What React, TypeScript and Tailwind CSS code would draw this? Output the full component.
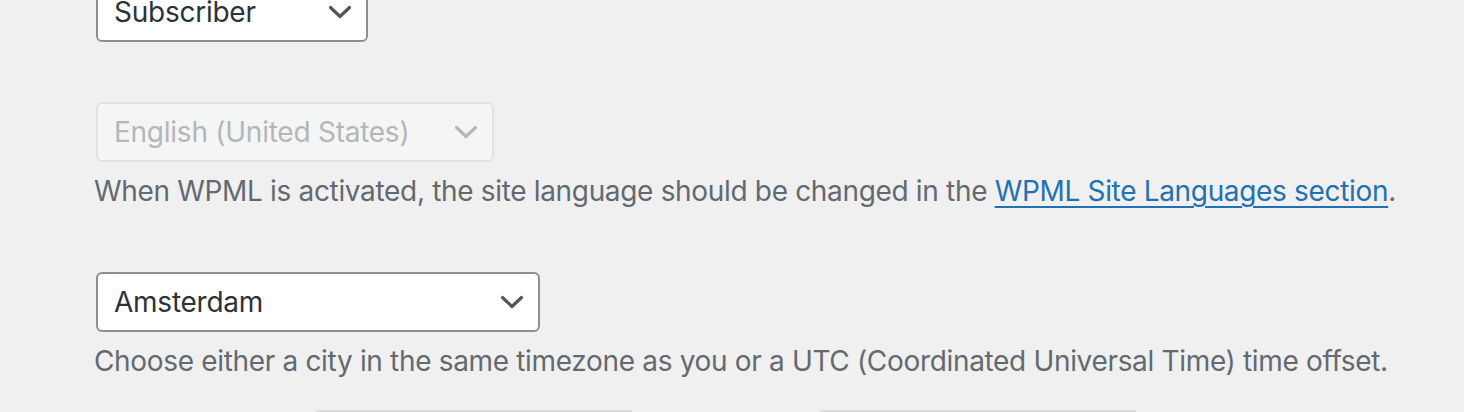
import { ReactNode } from 'react'

// Chevron drawn to match the WP admin select arrow
function Chevron({ disabled }: { disabled?: boolean }) {
    return (
        <svg
            className="absolute right-[14px] top-1/2 -translate-y-1/2"
            width="24"
            height="14"
            viewBox="0 0 24 14"
            fill="none"
            stroke={disabled ? '#b4b6b9' : '#50575e'}
            strokeWidth="3.2"
            strokeLinecap="round"
            strokeLinejoin="round"
        >
            <path d="M2.5 2.5l9.5 9 9.5-9" />
        </svg>
    )
}

function FakeSelect({ value, width, disabled }: { value: string; width: string; disabled?: boolean }) {
    return (
        <div
            className={`relative h-[60px] rounded-[6px] border-2 pl-[16px] flex items-center text-[28px] tracking-[-0.25px] ${width} ${
                disabled
                    ? 'border-[#e1e2e3] bg-[#f4f5f5] text-[#b4b6b9]'
                    : 'border-[#8c8f94] bg-white text-[#2c3338]'
            }`}
        >
            {value}
            <Chevron disabled={disabled} />
        </div>
    )
}

function Row({ children }: { children: ReactNode }) {
    return <div className="py-[30px] pl-[96px]">{children}</div>
}

export default function App() {
    return (
        <div
            className="w-[1464px] h-[412px] overflow-hidden bg-[#f0f0f1]"
            style={{ fontFamily: 'Inter, "Noto Sans", sans-serif' }}
        >
            <div className="-mt-[48px]">
                <Row>
                    <FakeSelect value="Subscriber" width="w-[272px]" />
                </Row>
                <Row>
                    <FakeSelect value="English (United States)" width="w-[398px]" disabled />
                    <p className="mt-[8px] -ml-[2px] text-[28px] leading-[42px] tracking-[-0.33px] text-[#646970]">
                        When WPML is activated, the site language should be changed in the{' '}
                        <a href="#" className="text-[#2271b1] underline underline-offset-[5px] decoration-2">
                            WPML Site Languages section
                        </a>
                        .
                    </p>
                </Row>
                <Row>
                    <FakeSelect value="Amsterdam" width="w-[444px]" />
                    <p className="mt-[8px] -ml-[2px] text-[28px] leading-[42px] tracking-[-0.33px] text-[#646970]">
                        Choose either a city in the same timezone as you or a UTC (Coordinated Universal Time) time offset.
                    </p>
                </Row>
            </div>
            <div className="-mt-[2px] flex">
                <div className="ml-[316px] w-[316px] h-[20px] border-t-2 border-[#dcdcde]" />
                <div className="ml-[188px] w-[316px] h-[20px] border-t-2 border-[#dcdcde]" />
            </div>
        </div>
    )
}
